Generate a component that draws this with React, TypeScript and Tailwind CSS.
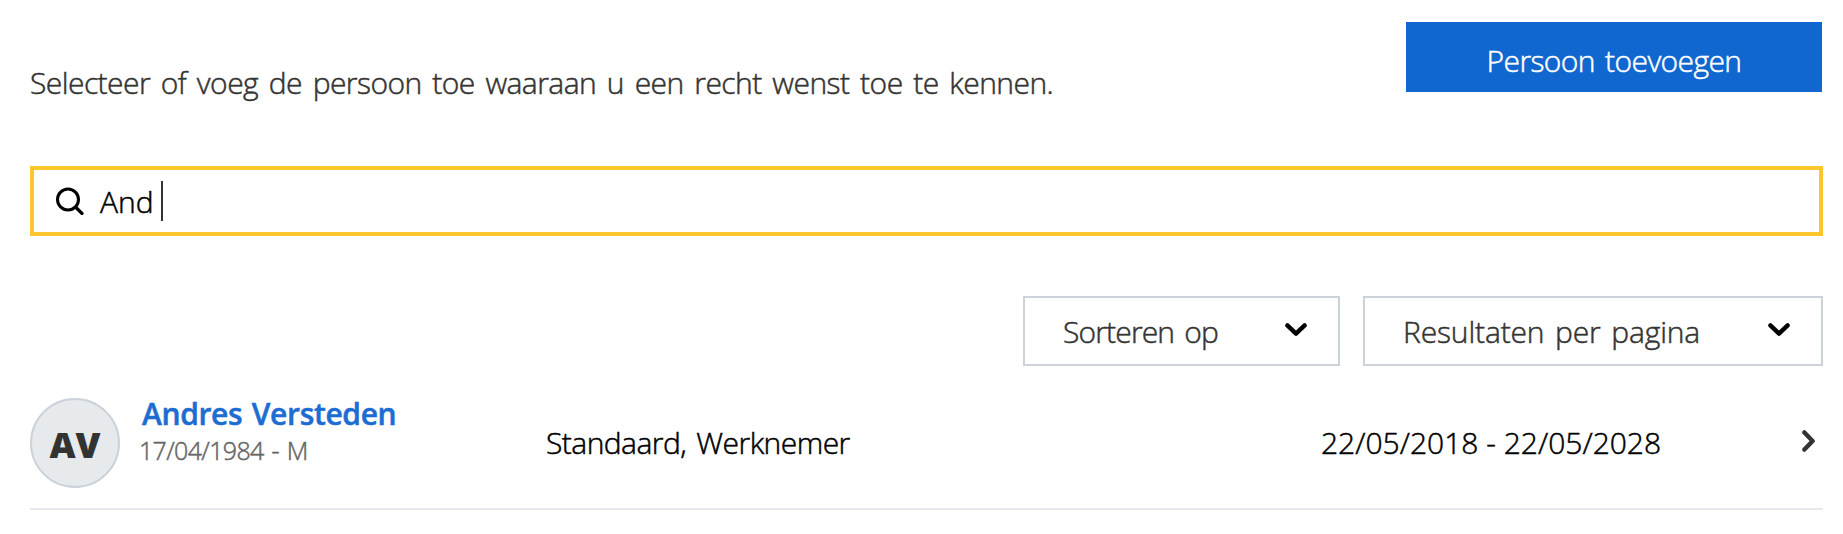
import type { ReactNode } from "react";

function Chevron({ className }: { className: string }) {
  return (
    <svg viewBox="0 0 22 14" className={className} fill="none" stroke="currentColor" strokeWidth="4.4" strokeLinecap="round" strokeLinejoin="round">
      <path d="M2.4 2.4 11 10.6 19.6 2.4" />
    </svg>
  );
}

function Select({ className, children }: { className: string; children: ReactNode }) {
  return (
    <button className={`flex h-[70px] items-center justify-between border-2 border-[#cbd2da] bg-white pl-[38px] pr-[31px] text-[#333332] [word-spacing:3px] ${className}`}>
      {children}
      <Chevron className="mb-[2px] h-[14px] w-[22px] text-black" />
    </button>
  );
}

export default function App() {
  return (
    <main className="flex h-[534px] w-full flex-col bg-white pl-[30px] pr-5 pt-[22px] font-['Open_Sans',sans-serif] text-[30px] leading-[40px] font-light whitespace-nowrap text-black [-webkit-text-stroke:0.5px]">
      <header className="flex items-start justify-between pr-px">
        <p className="pt-[41px] tracking-[-0.55px] text-[#333332] [word-spacing:3.4px]">Selecteer of voeg de persoon toe waaraan u een recht wenst toe te kennen.</p>
        <button className="flex h-[70px] w-[416px] items-center justify-center bg-[#1067cf] pt-[8px] text-white">
          <span className="tracking-[-0.6px] [word-spacing:3px]">Persoon toevoegen</span>
        </button>
      </header>

      <div className="mt-[63px] flex h-[70px] items-center border-4 border-[#ffc52d] pl-[22px]">
        <svg viewBox="0 0 28 28" className="h-7 w-7" fill="none" stroke="currentColor" strokeLinecap="round">
          <circle cx="12" cy="12.5" r="10.5" strokeWidth="3" />
          <path d="m20 20.5 6 6" strokeWidth="3.2" />
        </svg>
        <span className="ml-4 pt-[2px]">And</span>
        <i className="ml-[7px] h-10 w-[2px] bg-[#333332]" />
      </div>

      <div className="mt-[60px] flex justify-end gap-[23px]">
        <Select className="w-[317px] tracking-[-0.85px]"><span className="pt-[2px]">Sorteren op</span></Select>
        <Select className="w-[460px] tracking-[-0.15px]"><span className="pt-[2px]">Resultaten per pagina</span></Select>
      </div>

      <div className="mt-8 flex h-[112px] border-b-2 border-[#e6eaee]">
        <div className="flex size-[90px] shrink-0 items-center justify-center rounded-full border-2 border-[#cbd2da] bg-[#e6eaed] pt-[3px] text-[36px] font-extrabold text-[#333332] [-webkit-text-stroke:0px]">
          <span>AV</span>
        </div>
        <div className="ml-[22px] flex w-[404px] flex-col">
          <span className="-mt-[4px] font-semibold tracking-[-0.35px] text-[#1d6cd2] [word-spacing:2px]">Andres Versteden</span>
          <span className="-ml-[3px] -mt-[4px] text-[25px] tracking-[-0.65px] text-[#666] [word-spacing:2px]">17/04/1984 - M</span>
        </div>
        <span className="w-[775px] pt-[25px] tracking-[-0.55px] [word-spacing:3px]">Standaard, Werknemer</span>
        <span className="pt-[25px]">22/05/2018 - 22/05/2028</span>
        <Chevron className="mr-[3px] mt-[36px] ml-auto h-[14px] w-[22px] -rotate-90 text-[#333332]" />
      </div>
    </main>
  );
}
